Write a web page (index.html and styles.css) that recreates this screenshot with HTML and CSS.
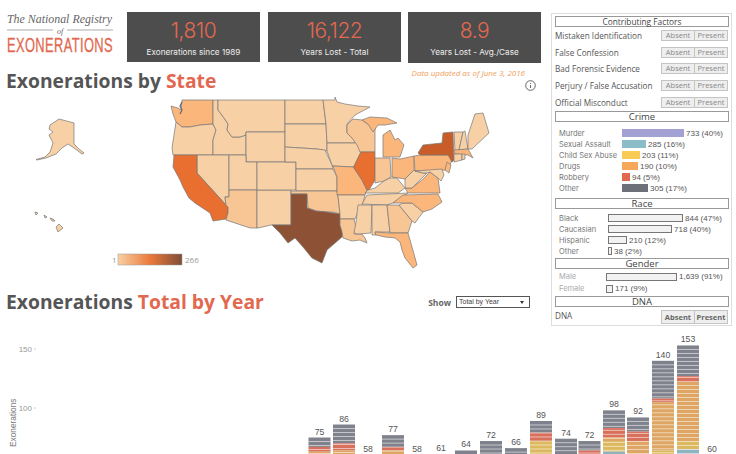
FILE: index.html
```html
<!DOCTYPE html>
<html lang="en">
<head>
    <meta charset="UTF-8">
    <meta name="viewport" content="width=device-width, initial-scale=1.0">
    <title>National Registry of Exonerations</title>
    <link rel="stylesheet" href="styles.css">
</head>
<body>
    <div class="page">
        <div class="left">
            <div class="top-row">
                <svg class="logo" width="127" height="51" viewBox="0 0 127 51">
                    <text class="logo-top" x="7" y="11" textLength="105" lengthAdjust="spacingAndGlyphs">The National Registry</text>
                    <line class="logo-rule" x1="7" y1="18" x2="53" y2="18"></line>
                    <text class="logo-of" x="57" y="22">of</text>
                    <line class="logo-rule" x1="67" y1="18" x2="113" y2="18"></line>
                    <text class="logo-main" transform="translate(7 39.5) scale(0.66 1)">EXONERATIONS</text>
                </svg>
                <div class="card"><div class="card-num">1,810</div><div class="card-label">Exonerations since 1989</div></div>
                <div class="card"><div class="card-num">16,122</div><div class="card-label">Years Lost - Total</div></div>
                <div class="card"><div class="card-num">8.9</div><div class="card-label">Years Lost - Avg./Case</div></div>
            </div>

            <div class="heading-row">
                <h2>Exonerations by <span class="accent">State</span></h2>
                <div class="note-block">
                    <div class="note">Data updated as of June 3, 2016</div>
                    <svg class="info" width="11" height="11" viewBox="0 0 11 11">
                        <circle cx="5.5" cy="5.5" r="4.8"></circle>
                        <line x1="5.5" y1="5" x2="5.5" y2="8"></line>
                        <line x1="5.5" y1="3" x2="5.5" y2="4"></line>
                    </svg>
                </div>
            </div>

            <svg class="map" width="551" height="174" viewBox="0 96 551 174">
                <defs>
                    <linearGradient id="legendGrad">
                        <stop offset="0" stop-color="#f9d0a4"></stop>
                        <stop offset="0.5" stop-color="#ea7a3a"></stop>
                        <stop offset="1" stop-color="#7f4e38"></stop>
                    </linearGradient>
                </defs>
                <!-- alaska + hawaii -->
                <polygon class="st" points="50,125 59,119 74,123 74,144 79,149 84,153 82,154 74,148 68,144 62,148 56,154 46,158 37,160 36,159.5 45,157 50,152 53,143 49,135 53,132 49,129"></polygon>
                <polygon class="st" points="59,224 63,228 58,232 56,227"></polygon>
                <polygon class="st" points="50,218 53,219 55,221 52,221"></polygon>
                <polygon class="st" points="44,215 47,217 45,218"></polygon>
                <polygon class="st" points="35,212 38,213 36,215"></polygon>
                <!-- west -->
                <polygon class="st mid" points="171,106 178,108 181,110 182,100 213,100 213,124 200,125 190,127 182,127 176,122 173,114"></polygon>
                <polyline class="sound" points="182,102 180,106 182,110 180,114"></polyline>
                <polygon class="st" points="176,122 182,127 190,127 200,125 213,124 216,130 213,140 213,155 173,155 172,148 174,135"></polygon>
                <polygon class="st" points="213,100 218,100 218,110 224,118 228,124 227,130 232,137 240,137 246,135 246,155 213,155 213,140 216,130 213,124"></polygon>
                <polygon class="st" points="218,100 285,100 285,132 246,132 246,135 240,137 232,137 227,130 228,124 224,118 218,110"></polygon>
                <polygon class="st" points="246,132 285,132 285,162 246,162"></polygon>
                <polygon class="st" points="197,155 229,155 229,197 225,197 226,205 197,173"></polygon>
                <polygon class="st hot" points="174,155 197,155 197,173 226,205 228,207 228,213 226,219 213,221 210,213 195,203 189,198 183,187 180,180 173,167"></polygon>
                <polygon class="st" points="229,155 246,155 246,162 257,162 257,190 229,190"></polygon>
                <polygon class="st soft" points="229,190 257,190 257,228 250,228 226,220 228,213 228,207 226,205 225,197 229,197"></polygon>
                <polygon class="st" points="257,190 291,190 291,225 272,225 271,225 258,228 257,228"></polygon>
                <polygon class="st" points="257,162 296,162 296,190 257,190"></polygon>
                <!-- plains -->
                <polygon class="st" points="285,100 323,100 326,124 285,124"></polygon>
                <polygon class="st" points="285,124 326,124 327,143 327,151 317,149 285,147"></polygon>
                <polygon class="st" points="285,147 317,149 325,150 332,165 333,169 296,169 296,162 285,162"></polygon>
                <polygon class="st" points="296,169 333,169 337,177 337,191 296,191"></polygon>
                <polygon class="st soft" points="291,191 337,191 338,196 340,214 333,212 326,212 316,211 308,208 307,194 291,194"></polygon>
                <polygon class="st dark" points="291,194 307,194 307,208 316,211 327,212 340,214 340,225 343,232 342,237 327,250 322,263 312,258 303,247 295,238 288,243 280,233 272,225 291,225"></polygon>
                <polygon class="st" points="323,100 335,100 335,97 337,102 345,104 358,106 370,107 355,115 347,124 347,133 352,138 357,143 327,143 326,124"></polygon>
                <polygon class="st" points="327,143 357,143 361,152 358,158 354,167 333,166 332,165 327,151"></polygon>
                <polygon class="st mid" points="333,166 354,167 354,168 362,180 367,190 365,195 337,195 337,177"></polygon>
                <polygon class="st" points="337,195 365,195 363,203 358,212 355,219 340,219 340,214 338,196"></polygon>
                <polygon class="st soft" points="340,219 354,219 356,227 354,234 362,234 365,238 367,243 360,240 352,241 343,238 342,232 340,225"></polygon>
                <!-- great lakes -->
                <polygon class="st soft" points="347,125 353,119 362,120 368,124 375,128 375,152 360,152 357,145 352,138 347,133"></polygon>
                <polygon class="st mid" points="362,120 370,117 387,118 397,123 385,125 378,125 373,132 368,124"></polygon>
                <polygon class="st mid" points="383,135 390,130 395,140 398,138 404,145 400,157 383,157 383,147"></polygon>
                <polygon class="st hot" points="361,152 375,152 375,180 369,190 367,190 362,180 354,168 354,166 358,158"></polygon>
                <polygon class="st soft" points="375,158 390,158 391,177 384,181 375,183 375,180"></polygon>
                <polygon class="st mid" points="392,158 400,159 414,156 414,170 405,179 392,177"></polygon>
                <!-- south -->
                <polygon class="st" points="365,193 368,190 375,188 384,181 390,178 397,178 405,188 398,193"></polygon>
                <polygon class="st" points="362,204 367,195 408,193 393,203 387,205"></polygon>
                <polygon class="st" points="358,205 372,205 371,233 358,234 354,233 356,222"></polygon>
                <polygon class="st" points="372,205 387,205 390,232 375,232 376,235 372,235"></polygon>
                <polygon class="st soft" points="387,205 399,205 412,221 408,233 390,233"></polygon>
                <polygon class="st mid" points="375,232 390,233 408,233 412,247 417,265 413,268 405,258 402,250 400,242 395,238 385,237 376,235"></polygon>
                <polygon class="st" points="399,205 403,203 412,203 423,212 415,223 412,221"></polygon>
                <polygon class="st mid" points="393,203 403,195 438,194 442,202 432,209 423,212 412,203 403,203"></polygon>
                <polygon class="st mid" points="405,188 412,188 422,180 430,172 438,178 440,193 408,193"></polygon>
                <polygon class="st" points="405,179 414,170 415,171 423,173 427,173 420,180 412,188 405,188"></polygon>
                <!-- northeast -->
                <polygon class="st mid" points="414,156 420,155 448,155 453,159 447,170 415,171"></polygon>
                <polygon class="st" points="415,171 442,169 444,175 441,181 438,178 430,172 427,173 423,173"></polygon>
                <polygon class="st mid" points="447,162 451,165 449,173 445,170"></polygon>
                <polygon class="st ny" points="418,153 423,145 442,143 443,133 453,132 454,160 452,162 448,155 420,155"></polygon>
                <polygon class="st" points="454,132 463,132 459,150 455,151"></polygon>
                <polygon class="st" points="465,131 468,149 459,150 463,132"></polygon>
                <polygon class="st" points="468,135 475,114 483,113 489,133 472,149 468,149"></polygon>
                <polygon class="st mid" points="454,150 468,149 473,158 468,155 455,154"></polygon>
                <polygon class="st" points="454,154 462,154 462,160 454,162"></polygon>
                <polygon class="st" points="462,154 465,154 465,159 462,160"></polygon>
                <!-- legend -->
                <text class="legend-text" x="112" y="263">1</text>
                <rect x="118" y="254" width="64" height="11" fill="url(#legendGrad)" stroke="#999" stroke-width="0.5"></rect>
                <text class="legend-text" x="185" y="263">266</text>
            </svg>

            <div class="heading-row section-two">
                <h2>Exonerations <span class="accent">Total by Year</span></h2>
                <div class="show">
                    <span class="show-label">Show</span>
                    <div class="fake-select">Total by Year<span class="caret"></span></div>
                </div>
            </div>
        </div>

        <div class="panel">
            <div class="panel-head panel-head-small">Contributing Factors</div>
            <div class="factor"><span>Mistaken Identification</span><div class="toggle"><span>Absent</span><span>Present</span></div></div>
            <div class="factor"><span>False Confession</span><div class="toggle"><span>Absent</span><span>Present</span></div></div>
            <div class="factor"><span>Bad Forensic Evidence</span><div class="toggle"><span>Absent</span><span>Present</span></div></div>
            <div class="factor"><span>Perjury / False Accusation</span><div class="toggle"><span>Absent</span><span>Present</span></div></div>
            <div class="factor"><span>Official Misconduct</span><div class="toggle"><span>Absent</span><span>Present</span></div></div>

            <div class="panel-head">Crime</div>
            <div class="bars bars-crime">
                <div class="bar-row"><span class="bar-label">Murder</span><span class="bar murder" style="width:62px"></span><span class="bar-val">733 (40%)</span></div>
                <div class="bar-row"><span class="bar-label">Sexual Assault</span><span class="bar sexual" style="width:24px"></span><span class="bar-val">285 (16%)</span></div>
                <div class="bar-row"><span class="bar-label">Child Sex Abuse</span><span class="bar child" style="width:18px"></span><span class="bar-val">203 (11%)</span></div>
                <div class="bar-row"><span class="bar-label">Drugs</span><span class="bar drugs" style="width:16px"></span><span class="bar-val">190 (10%)</span></div>
                <div class="bar-row"><span class="bar-label">Robbery</span><span class="bar robbery" style="width:8px"></span><span class="bar-val">94 (5%)</span></div>
                <div class="bar-row"><span class="bar-label">Other</span><span class="bar other" style="width:26px"></span><span class="bar-val">305 (17%)</span></div>
            </div>

            <div class="panel-head">Race</div>
            <div class="bars bars-race">
                <div class="bar-row"><span class="bar-label">Black</span><span class="bar empty" style="width:75px"></span><span class="bar-val">844 (47%)</span></div>
                <div class="bar-row"><span class="bar-label">Caucasian</span><span class="bar empty" style="width:64px"></span><span class="bar-val">718 (40%)</span></div>
                <div class="bar-row"><span class="bar-label">Hispanic</span><span class="bar empty" style="width:19px"></span><span class="bar-val">210 (12%)</span></div>
                <div class="bar-row"><span class="bar-label">Other</span><span class="bar empty" style="width:4px"></span><span class="bar-val">38 (2%)</span></div>
            </div>

            <div class="panel-head">Gender</div>
            <div class="bars bars-gender">
                <div class="bar-row"><span class="bar-label">Male</span><span class="bar empty" style="width:71px"></span><span class="bar-val">1,639 (91%)</span></div>
                <div class="bar-row"><span class="bar-label">Female</span><span class="bar empty" style="width:7px"></span><span class="bar-val">171 (9%)</span></div>
            </div>

            <div class="panel-head">DNA</div>
            <div class="factor dna"><span>DNA</span><div class="toggle toggle-bold"><span>Absent</span><span>Present</span></div></div>
        </div>

        <svg class="chart" id="chart" width="736" height="127" viewBox="0 327 736 127"></svg>
    </div>

    <script src="chart.js"></script>
</body>
</html>
```

FILE: styles.css
```css
html, body {
    margin: 0;
    height: 454px;
    overflow: hidden;
    background: #fff;
}
body {
    font-family: "Open Sans", sans-serif;
    color: #555;
}
.page {
    display: grid;
    grid-template-columns: 551px 181px;
    grid-template-rows: 327px auto;
    width: 736px;
}
.left {
    min-width: 0;
}
.top-row {
    display: flex;
    padding-top: 12px;
    height: 51px;
}
.logo {
    flex: none;
}
.logo-top {
    font-family: "Liberation Serif", serif;
    font-style: italic;
    font-size: 12px;
    fill: #666;
}
.logo-of {
    font-family: "Liberation Serif", serif;
    font-style: italic;
    font-size: 8px;
    fill: #666;
}
.logo-rule {
    stroke: #888;
    stroke-width: 0.7;
}
.logo-main {
    font-family: "Liberation Sans", sans-serif;
    font-size: 19.5px;
    letter-spacing: 0.6px;
    fill: #e2684f;
    stroke: #e2684f;
    stroke-width: 0.3;
}
.card {
    box-sizing: border-box;
    width: 133px;
    height: 50px;
    margin-right: 8px;
    background: #4d4d4d;
    text-align: center;
    font-family: Inter, sans-serif;
}
.card:last-child {
    height: 51px;
    margin-right: 0;
    margin-left: -1px;
}
.card-num {
    margin-top: 6px;
    font-size: 21px;
    line-height: 26px;
    font-weight: 300;
    letter-spacing: -0.5px;
    color: #e2684f;
}
.card-label {
    margin-top: 3px;
    font-size: 8.2px;
    line-height: 11px;
    color: #eee;
}
.heading-row {
    display: flex;
    justify-content: space-between;
    height: 30px;
    margin-top: 3px;
    padding-left: 6px;
    padding-right: 15px;
}
h2 {
    margin: 0;
    font-size: 19.3px;
    line-height: 30px;
    font-weight: 700;
    color: #555;
}
.accent {
    color: #e2684f;
}
.note-block {
    display: flex;
    flex-direction: column;
    align-items: flex-end;
    padding-top: 2px;
}
.note {
    margin-right: 11px;
    font-size: 8px;
    line-height: 10px;
    font-style: italic;
    color: #f0a060;
}
.info {
    margin-top: 2px;
}
.info circle, .info line {
    fill: none;
    stroke: #555;
    stroke-width: 0.9;
}
.map {
    display: block;
}
.st {
    fill: #f7d0a6;
    stroke: #777;
    stroke-width: 0.7;
}
.st.soft { fill: #f8c595; }
.st.mid { fill: #fbb67c; }
.st.hot { fill: #e96f30; }
.st.ny { fill: #c85d2a; }
.st.dark { fill: #8d5236; }
.sound {
    fill: none;
    stroke: #667;
    stroke-width: 1.2;
}
.legend-text {
    font-size: 8px;
    fill: #999;
}
.section-two {
    margin-top: 17px;
    padding-right: 21px;
}
.show {
    display: flex;
    align-items: center;
    gap: 5px;
    height: 30px;
}
.show-label {
    font-size: 8.5px;
    font-weight: 700;
    color: #666;
}
.fake-select {
    position: relative;
    box-sizing: border-box;
    width: 74px;
    height: 12px;
    padding-left: 2px;
    border: 1px solid #555;
    font-family: "Liberation Sans", sans-serif;
    font-size: 7px;
    line-height: 10px;
    color: #444;
}
.caret {
    position: absolute;
    right: 5px;
    top: 3.5px;
    border-left: 2.5px solid transparent;
    border-right: 2.5px solid transparent;
    border-top: 3px solid #333;
}
.panel {
    box-sizing: border-box;
    height: 313px;
    margin-top: 13px;
    padding: 2px 2px 0 3px;
    border: 1px solid #ddd;
    font-size: 8.2px;
}
.panel-head {
    box-sizing: border-box;
    height: 11px;
    border: 1px solid #999;
    text-align: center;
    line-height: 9px;
    font-size: 9.5px;
    color: #444;
}
.panel-head-small {
    font-size: 8.3px;
}
.factor {
    display: flex;
    justify-content: space-between;
    align-items: center;
    height: 16.8px;
    padding-right: 1px;
    color: #555;
    white-space: nowrap;
}
.factor:last-of-type {
    margin-bottom: 1px;
}
.toggle {
    display: flex;
    box-sizing: border-box;
    width: 67px;
    height: 11px;
    border: 1px solid #c4c4c4;
    background: #eee;
}
.toggle span {
    flex: 1;
    text-align: center;
    font-size: 7.5px;
    line-height: 9px;
    color: #888;
}
.toggle span + span {
    border-left: 1px solid #c4c4c4;
}
.bars {
    padding-left: 4px;
}
.bars-crime {
    height: 76px;
    padding-top: 6px;
    box-sizing: border-box;
}
.bars-race {
    height: 49px;
    padding-top: 4px;
    box-sizing: border-box;
}
.bars-gender {
    height: 27px;
    padding-top: 2px;
    box-sizing: border-box;
}
.bar-row {
    display: flex;
    align-items: center;
    height: 11px;
}
.bars-gender .bar-row {
    height: 12px;
}
.bar-label {
    flex: none;
    font-family: Inter, sans-serif;
    font-size: 7.5px;
    color: #777;
}
.bars-crime .bar-label { width: 63px; }
.bars-race .bar-label { width: 49px; }
.bars-gender .bar-label { width: 47px; color: #aaa; }
.bar {
    flex: none;
    box-sizing: border-box;
    height: 8px;
}
.bar-val {
    margin-left: 2px;
    font-family: "Liberation Sans", sans-serif;
    font-size: 8px;
    color: #555;
}
.murder { background: #a3a0d3; }
.sexual { background: #8dbcc9; }
.child { background: #f8cb55; }
.drugs { background: #f5a85a; }
.robbery { background: #e2684f; }
.other { background: #6e7079; }
.empty {
    background: #f2f2f2;
    border: 1px solid #777;
}
.dna {
    height: 18px;
    align-items: flex-start;
    padding-top: 3px;
}
.toggle-bold {
    height: 14px;
}
.toggle-bold span {
    font-weight: 700;
    line-height: 12px;
    color: #666;
}
.chart {
    display: block;
    grid-column: 1 / 3;
}
.tick {
    font-family: "Liberation Sans", sans-serif;
    font-size: 8px;
    fill: #999;
    text-anchor: end;
}
.tick-mark {
    stroke: #ccc;
    stroke-width: 1;
}
.axis-title {
    font-family: "Liberation Sans", sans-serif;
    font-size: 8.3px;
    fill: #777;
}
.bar-top {
    font-family: "Liberation Sans", sans-serif;
    font-size: 8.7px;
    fill: #555;
    text-anchor: middle;
}
.seg-line {
    stroke: #fff;
    stroke-opacity: 0.55;
    stroke-width: 1;
}
```

FILE: chart.js
```js
// stacked bars per year, segments are [colour, height in units] from the top down
const SCALE = 1.18;
const BASE = 526;
const BAR_W = 22;

const gray = '#7f828c', red = '#d9705c', tan = '#dea563', yellow = '#dcb95e', blue = '#8fb3bf';

const years = [
    { x: 319.5, total: 75, segs: [[gray, 8], [red, 4], [tan, 63]] },
    { x: 344, total: 86, segs: [[gray, 16], [red, 6], [tan, 64]] },
    { x: 368, total: 58, segs: [[gray, 58]] },
    { x: 393, total: 77, segs: [[gray, 10], [red, 3], [tan, 64]] },
    { x: 417, total: 58, segs: [[gray, 58]] },
    { x: 441, total: 61, segs: [[gray, 61]] },
    { x: 466, total: 64, segs: [[gray, 64]] },
    { x: 491, total: 72, segs: [[gray, 72]] },
    { x: 516, total: 66, segs: [[gray, 66]] },
    { x: 541, total: 89, segs: [[gray, 10], [red, 7], [yellow, 72]] },
    { x: 566, total: 74, segs: [[gray, 74]] },
    { x: 589.5, total: 72, segs: [[gray, 8], [red, 64]] },
    { x: 614, total: 98, segs: [[gray, 15], [red, 8], [tan, 3], [yellow, 9], [blue, 63]] },
    { x: 638, total: 92, segs: [[gray, 12], [red, 8], [tan, 72]] },
    { x: 663, total: 140, segs: [[gray, 32], [red, 3], [tan, 41], [yellow, 64]] },
    { x: 688, total: 153, segs: [[gray, 26], [red, 5], [tan, 50], [yellow, 7], [blue, 65]] },
    { x: 712, total: 60, segs: [[gray, 60]] }
];

const svg = document.getElementById('chart');

function add(tag, attrs, text) {
    const el = document.createElementNS('http://www.w3.org/2000/svg', tag);
    for (const k in attrs) el.setAttribute(k, attrs[k]);
    if (text !== undefined) el.textContent = text;
    svg.appendChild(el);
    return el;
}

[[150, 349], [100, 408]].forEach(([v, y]) => {
    add('text', { class: 'tick', x: 32, y: y + 3 }, v);
    add('line', { class: 'tick-mark', x1: 34, x2: 36, y1: y, y2: y });
});
add('text', { class: 'axis-title', transform: 'translate(16,447) rotate(-90)' }, 'Exonerations');

years.forEach((yr) => {
    let y = BASE - yr.total * SCALE;
    // keep the label inside the window for the short bars
    add('text', { class: 'bar-top', x: yr.x, y: Math.min(y - 3, 452) }, yr.total);
    yr.segs.forEach(([color, units]) => {
        const h = units * SCALE;
        add('rect', { x: yr.x - BAR_W / 2, y: y, width: BAR_W, height: h, fill: color });
        y += h;
    });
    const top = BASE - yr.total * SCALE;
    for (let ly = top + 4; ly < 454; ly += 4) {
        add('line', { class: 'seg-line', x1: yr.x - BAR_W / 2, x2: yr.x + BAR_W / 2, y1: ly, y2: ly });
    }
});
```
